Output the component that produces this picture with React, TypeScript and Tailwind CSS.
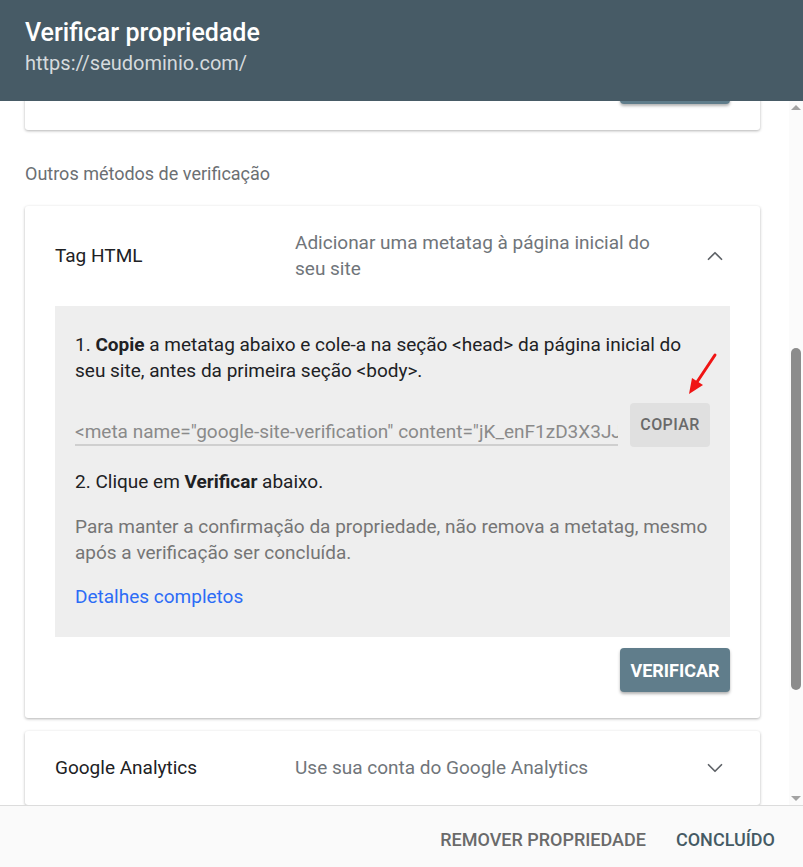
import { ChevronDown, ChevronUp } from "lucide-react";

const font = { fontFamily: "Roboto, 'Noto Sans', sans-serif" };

function ScrollBar() {
  return (
    <div className="w-[14px] shrink-0 bg-[#fbfbfb] flex flex-col items-center">
      <div className="mt-[4px] w-0 h-0 border-l-[5px] border-r-[5px] border-b-[5px] border-l-transparent border-r-transparent border-b-[#a3a3a3]" />
      <div className="mt-[238px] w-[10px] h-[342px] rounded-t-[5px] rounded-b-[5px] bg-[#8c8c8c]" />
      <div className="mt-auto mb-[4px] w-0 h-0 border-l-[5px] border-r-[5px] border-t-[5px] border-l-transparent border-r-transparent border-t-[#a3a3a3]" />
    </div>
  );
}

export default function App() {
  return (
    <div
      className="h-screen w-full flex flex-col bg-white overflow-hidden"
      style={font}
    >
      {/* cabeçalho */}
      <div className="h-[101px] shrink-0 bg-[#475b66] px-[25px] pt-[18px] z-10 relative">
        <h1 className="text-[25px] leading-[30px] font-medium text-white">
          Verificar propriedade
        </h1>
        <p className="text-[20px] leading-[26px] text-[#d5dadd] mt-[2px]">
          https://seudominio.com/
        </p>
      </div>

      {/* área rolável */}
      <div className="flex-1 flex min-h-0">
        <div className="flex-1 overflow-hidden">
          <div className="-mt-[60px] pl-[25px] pr-[29px]">
            {/* card anterior (cortado pela rolagem) */}
            <div className="h-[89px] bg-white rounded-[3px] shadow-[0_1px_3px_rgba(0,0,0,0.3)] flex items-end justify-end pr-[30px] pb-[26px]">
              <div className="w-[110px] h-[44px] rounded-[4px] bg-[#607d8b] shadow-[0_2px_3px_rgba(0,0,0,0.3)]" />
            </div>

            <p className="mt-[33px] text-[18px] leading-[22px] text-[#6b6f73]">
              Outros métodos de verificação
            </p>

            {/* Tag HTML */}
            <div className="mt-[21px] bg-white rounded-[3px] shadow-[0_1px_3px_rgba(0,0,0,0.3)] px-[30px] pb-[26px]">
              <div className="flex items-center py-6">
                <div className="w-[240px] text-[19px] leading-[26px] text-[#202124]">
                  Tag HTML
                </div>
                <div className="w-[380px] text-[19px] leading-[26px] text-[#70757a]">
                  Adicionar uma metatag à página inicial do seu site
                </div>
                <div className="flex-1 flex justify-end pr-[2px]">
                  <ChevronUp size={26} strokeWidth={1.6} color="#5f6368" />
                </div>
              </div>

              <div className="relative bg-[#eeeeee] px-5 pt-[26px] pb-[27px] text-[19px] leading-[26px] text-[#202124]">
                <p>
                  1. <b className="font-bold">Copie</b> a metatag abaixo e
                  cole-a na seção &lt;head&gt; da página inicial do seu site,
                  antes da primeira seção &lt;body&gt;.
                </p>

                <div className="mt-[19px] flex items-start gap-3">
                  <div className="flex-1 min-w-0 pt-[17px] border-b-2 border-[#cfcfcf] overflow-hidden whitespace-nowrap text-[#8a8a8a] leading-[24px]">
                    &lt;meta name="google-site-verification"
                    content="jK_enF1zD3X3JJ5c8yQpR0aLmT7vW2xN9bHs4kGdUo"
                    /&gt;
                  </div>
                  <button className="w-[80px] h-[44px] shrink-0 rounded-[4px] bg-[#e0e0e0] text-[16px] font-medium tracking-wide text-[#6a6a6a]">
                    COPIAR
                  </button>
                </div>

                <p className="mt-[22px]">
                  2. Clique em <b className="font-bold">Verificar</b> abaixo.
                </p>

                <p className="mt-[19px] text-[#757575]">
                  Para manter a confirmação da propriedade, não remova a
                  metatag, mesmo após a verificação ser concluída.
                </p>

                <p className="mt-[18px]">
                  <a className="text-[#2c6cf6]" href="#">
                    Detalhes completos
                  </a>
                </p>

                {/* seta vermelha de destaque */}
                <svg
                  className="absolute left-[630px] top-[45px]"
                  width="40"
                  height="46"
                  viewBox="0 0 40 46"
                >
                  <line
                    x1="30"
                    y1="4"
                    x2="10"
                    y2="34"
                    stroke="#f01414"
                    strokeWidth="3"
                    strokeLinecap="round"
                  />
                  <polygon points="4,43 7,27 18,34" fill="#f01414" />
                </svg>
              </div>

              <div className="mt-[11px] flex justify-end">
                <button className="w-[110px] h-[44px] rounded-[4px] bg-[#607d8b] text-white text-[18px] font-bold shadow-[0_2px_3px_rgba(0,0,0,0.3)]">
                  VERIFICAR
                </button>
              </div>
            </div>

            {/* Google Analytics */}
            <div className="mt-[13px] bg-white rounded-[3px] shadow-[0_1px_3px_rgba(0,0,0,0.3)] px-[30px]">
              <div className="flex items-center py-6">
                <div className="w-[240px] text-[19px] leading-[26px] text-[#202124]">
                  Google Analytics
                </div>
                <div className="w-[380px] text-[19px] leading-[26px] text-[#70757a]">
                  Use sua conta do Google Analytics
                </div>
                <div className="flex-1 flex justify-end pr-[2px]">
                  <ChevronDown size={26} strokeWidth={1.6} color="#5f6368" />
                </div>
              </div>
            </div>
          </div>
        </div>
        <ScrollBar />
      </div>

      {/* rodapé */}
      <div className="h-[62px] shrink-0 bg-[#fafafa] border-t border-[#dcdcdc] flex items-center justify-end pr-[28px] pt-[5px] gap-[30px] text-[18px] font-medium">
        <button className="text-[#6a6a6a]">REMOVER PROPRIEDADE</button>
        <button className="text-[#455a64]">CONCLUÍDO</button>
      </div>
    </div>
  );
}
